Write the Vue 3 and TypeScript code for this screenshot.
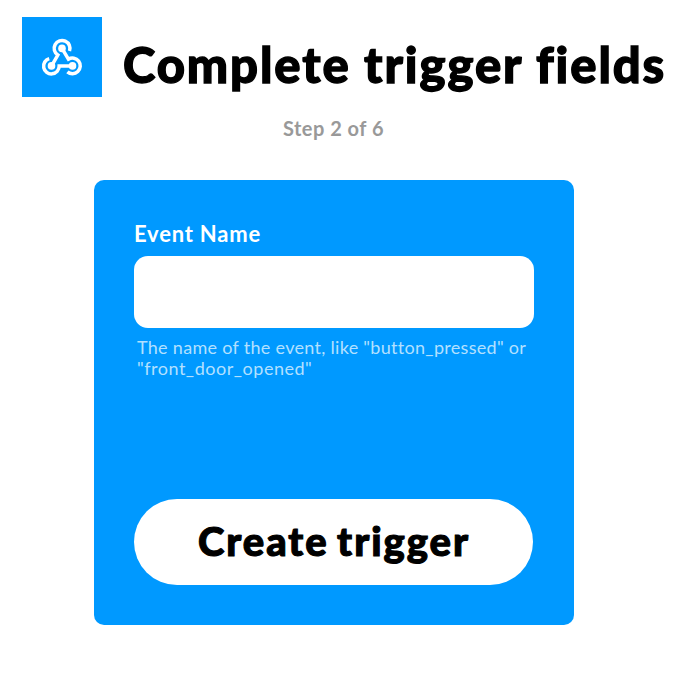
<script setup lang="ts">
import { ref } from 'vue'

const eventName = ref<string>('')
</script>

<template>
  <main class="page">
    <header class="header">
      <div class="service">
        <svg viewBox="0 0 80 80" fill="none" stroke="#fff" stroke-width="3.5">
          <path d="M47.5 34A7.9 7.9 0 1 0 35.8 38L29.6 48.8" />
          <path d="M27.2 41.6A7.8 7.8 0 1 0 37.2 49.1H50.4" />
          <path d="M45.4 54.8A7.8 7.8 0 1 0 46.4 42.2L40 31.4" />
          <g fill="#fff" stroke="none">
            <circle cx="40" cy="31.4" r="3.8" />
            <circle cx="29.5" cy="48.9" r="3.8" />
            <circle cx="50.5" cy="48.9" r="3.8" />
          </g>
        </svg>
      </div>
      <h1 class="title">Complete trigger fields</h1>
    </header>
    <p class="step">Step 2 of 6</p>
    <form class="card" @submit.prevent>
      <label class="label" for="event">Event Name</label>
      <input id="event" v-model="eventName" class="field" type="text" />
      <p class="hint">The name of the event, like "button_pressed" or<br /><span class="example">"front_door_opened"</span></p>
      <button class="submit" type="submit">Create trigger</button>
    </form>
  </main>
</template>

<style>
body {
  background: #fff;
}
</style>

<style scoped>
.page {
  box-sizing: border-box;
  height: 674px;
  padding-top: 17px;
  overflow: hidden;
  font-family: Lato, sans-serif;
}
.header {
  display: flex;
  gap: 21px;
  padding-left: 22px;
}
.service {
  flex: none;
  width: 80px;
  height: 80px;
  background: #0099ff;
}
.service svg {
  display: block;
}
.title {
  margin: 18px 0 0;
  font-size: 49px;
  line-height: 58px;
  font-weight: 900;
  letter-spacing: 1.9px;
  -webkit-text-stroke: 1.3px #000;
  white-space: nowrap;
  color: #000;
}
.step {
  margin: 19px 0 0;
  width: 667px;
  text-align: center;
  font-size: 20px;
  line-height: 24px;
  font-weight: 700;
  letter-spacing: 0.5px;
  color: #999;
}
.card {
  box-sizing: border-box;
  width: 480px;
  height: 445px;
  margin: 40px 0 0 94px;
  padding: 40px;
  border-radius: 10px;
  background: #0099ff;
  display: flex;
  flex-direction: column;
}
.label {
  font-size: 22px;
  line-height: 28px;
  font-weight: 700;
  letter-spacing: 0.8px;
  color: #fff;
}
.field {
  box-sizing: border-box;
  width: 400px;
  height: 72px;
  margin: 8px 0 0;
  padding: 0 16px;
  border: 0;
  border-radius: 14px;
  background: #fff;
  font: 700 24px Lato, sans-serif;
  outline: none;
}
.hint {
  margin: 9px 0 0 3px;
  font-size: 18px;
  line-height: 21px;
  letter-spacing: 0.3px;
  white-space: nowrap;
  color: #b3e0ff;
}
.example {
  letter-spacing: 0.52px;
}
.submit {
  width: 399px;
  height: 86px;
  margin-top: auto;
  padding: 0 0 2px 1px;
  border: 0;
  border-radius: 43px;
  background: #fff;
  font: 900 40px Lato, sans-serif;
  letter-spacing: 1.95px;
  word-spacing: -3px;
  -webkit-text-stroke: 1.1px #000;
  color: #000;
}
</style>
